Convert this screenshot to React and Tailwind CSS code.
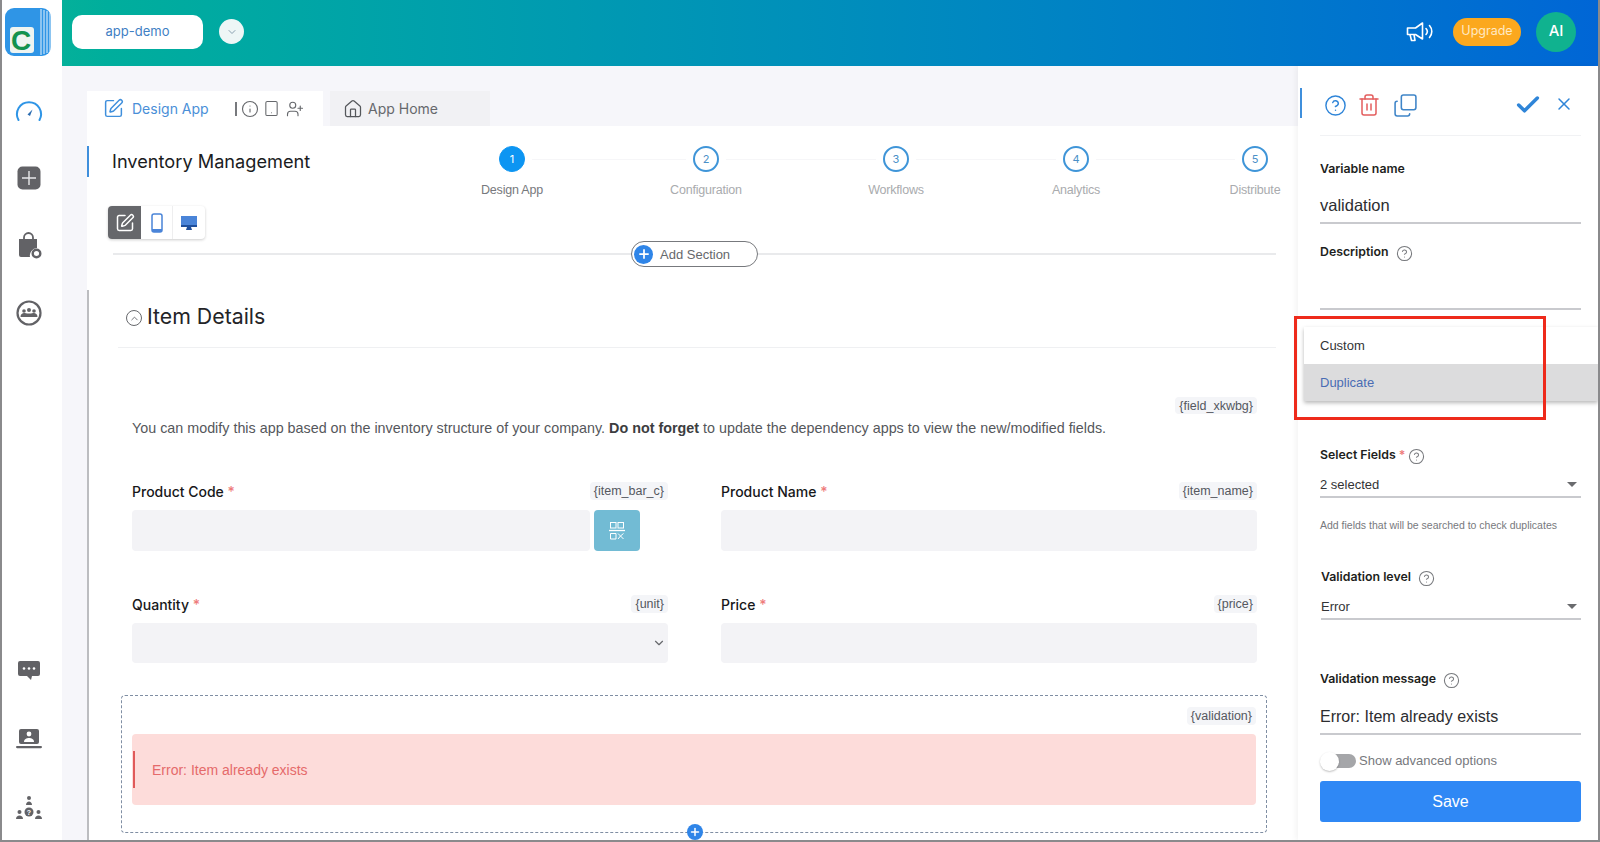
import React from 'react';
import { Check, ChevronDown, ChevronUp, CircleHelp, Copy, House, Info, Plus, SquarePen, Trash2, Tablet, UserPlus, X } from 'lucide-react';

const SANS = 'font-["Liberation_Sans",Arial,sans-serif]';

const steps = [
  { n: 1, label: 'Design App', link: 154 },
  { n: 2, label: 'Configuration', link: 150 },
  { n: 3, label: 'Workflows', link: 140 },
  { n: 4, label: 'Analytics', link: 139 },
  { n: 5, label: 'Distribute' },
];

const Logo = () => (
  <svg width="48" height="50" viewBox="0 0 48 50" className="block">
    <rect x="0" y="0" width="46" height="48" rx="9" fill="#2f95e6" />
    <path d="M36 1v46M39 2v44M42 3v42M45 5v38" stroke="#ffffff" strokeWidth="0.9" />
    <rect x="5" y="19" width="24" height="26" rx="3" fill="#eef4f1" />
    <text x="6" y="42" fontSize="28" fontWeight="700" fill="#12924f" fontFamily="Liberation Sans, sans-serif">C</text>
  </svg>
);

const GaugeIcon = () => (
  <svg width="28" height="28" viewBox="0 0 28 28" fill="none">
    <path d="M3.5 23 A12 12 0 1 1 24.5 23" stroke="#2f95e6" strokeWidth="2" strokeLinecap="round" />
    <path d="M12.5 17.5 L17.5 12.5 L15 19 Z" fill="#2b6cb0" />
  </svg>
);

const AddIcon = () => (
  <svg width="26" height="26" viewBox="0 0 26 26">
    <rect x="1.500" y="1.500" width="23" height="23" rx="5" fill="#626266" />
    <path d="M13 6v14M6 13h14" stroke="#e8e8ea" strokeWidth="1.400" />
  </svg>
);

const BagIcon = () => (
  <svg width="26" height="28" viewBox="0 0 26 28">
    <path d="M8 8V6.500a4.500 4.500 0 0 1 9 0V8" fill="none" stroke="#626266" strokeWidth="1.800" />
    <path d="M3 8h18v9a7.500 7.500 0 0 0-7 9H5a2 2 0 0 1-2-2z" fill="#626266" />
    <circle cx="20.500" cy="22.500" r="3.800" fill="none" stroke="#626266" strokeWidth="2.400" />
  </svg>
);

const GroupIcon = () => (
  <svg width="28" height="28" viewBox="0 0 28 28">
    <circle cx="14" cy="14" r="11.500" fill="none" stroke="#626266" strokeWidth="2.200" />
    <circle cx="14" cy="11" r="2" fill="#626266" />
    <circle cx="9" cy="12" r="1.800" fill="#626266" />
    <circle cx="19" cy="12" r="1.800" fill="#626266" />
    <path d="M5.500 18c0-3 2-4 3.500-4s2 .5 5 .5 3.500-.5 5-.5 3.500 1 3.500 4z" fill="#626266" />
  </svg>
);

const ChatIcon = () => (
  <svg width="28" height="28" viewBox="0 0 28 28">
    <path d="M5 5h18a2 2 0 0 1 2 2v11a2 2 0 0 1-2 2h-6l-1 4-4-4H5a2 2 0 0 1-2-2V7a2 2 0 0 1 2-2z" fill="#626266" />
    <circle cx="9" cy="12.500" r="1.300" fill="#fff" />
    <circle cx="14" cy="12.500" r="1.300" fill="#fff" />
    <circle cx="19" cy="12.500" r="1.300" fill="#fff" />
  </svg>
);

const LaptopIcon = () => (
  <svg width="28" height="28" viewBox="0 0 28 28">
    <rect x="4" y="4" width="20" height="15" rx="2" fill="#626266" />
    <circle cx="14" cy="9" r="2.400" fill="#fff" />
    <path d="M9 17c0-3 2.500-4 5-4s5 1 5 4z" fill="#fff" />
    <rect x="1" y="21" width="26" height="2.200" rx="1.100" fill="#626266" />
  </svg>
);

const NetworkIcon = () => (
  <svg width="28" height="28" viewBox="0 0 28 28">
    <circle cx="14" cy="4" r="2" fill="#626266" />
    <path d="M11 11c0-2 1.500-3.500 3-3.500s3 1.500 3 3.500z" fill="#626266" />
    <circle cx="4.500" cy="18" r="2" fill="#626266" />
    <path d="M1 25c0-2 1.500-3.500 3.500-3.500S8 23 8 25z" fill="#626266" />
    <circle cx="23.500" cy="18" r="2" fill="#626266" />
    <path d="M20 25c0-2 1.500-3.500 3.500-3.500S27 23 27 25z" fill="#626266" />
    <circle cx="14" cy="18" r="4.500" fill="#626266" />
    <text x="14" y="20.500" textAnchor="middle" fontSize="7" fontWeight="700" fill="#fff" fontFamily="Liberation Sans, sans-serif">?</text>
  </svg>
);

const SpeakerIcon = () => (
  <svg width="28" height="22" viewBox="0 0 28 22" fill="none" stroke="#ffffff" strokeWidth="1.600" className="ml-auto">
    <path d="M1.500 7h8l7-5v16l-7-4.500h-8z" strokeLinejoin="round" />
    <path d="M4 13.500l1.500 6h3.500l-1-6" strokeLinejoin="round" />
    <path d="M20 7.500a4.500 4.500 0 0 1 0 6" strokeLinecap="round" />
    <path d="M23.500 4.500a9 9 0 0 1 0 12" strokeLinecap="round" />
  </svg>
);

const ScanIcon = () => (
  <svg width="18" height="20" viewBox="0 0 18 20" fill="none" stroke="#ffffff" strokeWidth="1">
    <rect x="2.500" y="1.500" width="5.500" height="5.500" />
    <rect x="10" y="1.500" width="5.500" height="5.500" />
    <path d="M1 9.500h16" strokeWidth="1.300" />
    <path d="M2.500 18v-5.500h5.500V18zM10 12.500l2.500 2.500 3-2.500M10 18l2.500-3 3 3" />
  </svg>
);

const Tag = ({ children }) => (
  <span className={`rounded bg-[#f4f5f8] px-1 text-[12.500px] leading-[18px] text-[#55585f] ${SANS}`}>{children}</span>
);

const FieldHead = ({ label, tag }) => (
  <div className="flex h-[18px] items-center justify-between">
    <span className="text-[14px] font-medium text-[#17181a]">
      {label} <span className="text-[#ee7b7b]">*</span>
    </span>
    <Tag>{tag}</Tag>
  </div>
);

const PanelLabel = ({ children, star, help, className = '' }) => (
  <div className={`flex h-4 shrink-0 items-center text-[12.300px] font-semibold text-[#1d1e20] ${className}`}>
    {children}
    {star && <span className="ml-[3px] -mr-1 text-[#ee7b7b]">*</span>}
    {help && <CircleHelp size={17} strokeWidth={1.500} className="ml-[7px] mt-0.5 text-[#77797d]" />}
  </div>
);

const PanelSelect = ({ value, className = '' }) => (
  <div className={`flex h-[25px] items-center justify-between border-b-2 border-[#c9cace] pr-1 text-[13px] text-[#333436] ${SANS} ${className}`}>
    <span>{value}</span>
    <span className="h-0 w-0 border-x-[5px] border-t-[5px] border-x-transparent border-t-[#6a6b6e]" />
  </div>
);

const App = () => {
  return (
    <div className="flex h-[842px] w-[1600px] overflow-hidden border-x-2 border-b-2 border-[#8a8a8c] bg-white font-['Inter',sans-serif]">
      <aside className="flex w-[60px] shrink-0 flex-col items-center bg-white pr-[6px] pt-2">
        <div className="-ml-px h-[50px]"><Logo /></div>
        <div className="mt-[39px] flex flex-col items-center gap-10">
          <GaugeIcon />
          <AddIcon />
          <BagIcon />
          <GroupIcon />
        </div>
        <div className="mt-auto flex flex-col items-center gap-[41px] pb-[18px]">
          <ChatIcon />
          <LaptopIcon />
          <NetworkIcon />
        </div>
      </aside>

      <div className="flex min-w-0 flex-1 flex-col">
        <header className="flex h-[66px] shrink-0 items-center bg-gradient-to-r from-[#04b09a] to-[#0066d6] pb-[3px] pl-[10px] pr-[22px]">
          <div className="flex h-[34px] w-[131px] items-center justify-center rounded-[10px] bg-white text-[13px] text-[#3f7fc4]">app-demo</div>
          <div className="ml-4 flex h-[25px] w-[25px] items-center justify-center rounded-full bg-[#eef6f6]">
            <ChevronDown size={12} className="text-[#8aa0b0]" />
          </div>
          <SpeakerIcon />
          <div className="ml-[19px] flex h-7 w-[68px] items-center justify-center rounded-full bg-[#fba81e] text-[12.500px] text-[#ffe9c4]">Upgrade</div>
          <div className="ml-[15px] flex h-10 w-10 items-center justify-center rounded-full bg-[#10b28f] text-[15px] font-medium text-white">AI</div>
        </header>

        <div className="flex min-h-0 flex-1 bg-[#f6f6fa]">
          <main className="flex min-w-0 flex-1 flex-col pl-[25px] pt-[25px]">
            <div className="flex h-[35px] shrink-0">
              <div className="flex w-[236px] items-center bg-white pl-4">
                <SquarePen size={21} strokeWidth={1.700} className="text-[#3f8fdc]" />
                <span className="ml-2 text-[14px] text-[#4a8fd8]">Design App</span>
                <span className="ml-[26px] h-[14px] w-0.5 bg-[#77797d]" />
                <Info size={18} strokeWidth={1.500} className="ml-1 text-[#66686c]" />
                <Tablet size={17} strokeWidth={1.500} className="ml-1 text-[#66686c]" />
                <UserPlus size={18} strokeWidth={1.500} className="ml-1.5 text-[#66686c]" />
              </div>
              <div className="ml-[7px] flex w-[160px] items-center bg-[#f1f1f4] pl-[13px]">
                <House size={20} strokeWidth={1.500} className="text-[#55575b]" />
                <span className="ml-[5px] text-[14px] text-[#66686c]">App Home</span>
              </div>
            </div>

            <div className="flex min-h-0 flex-1 flex-col bg-white">
              <div className="flex h-20 shrink-0">
                <div className="mt-5 flex h-[31px] w-[385px] items-center border-l-2 border-[#3f8fdc] pl-[23px] text-[18.200px] text-[#1b1c1e]">
                  Inventory Management
                </div>
                <div className="flex pt-5">
                  {steps.map((s) => (
                    <React.Fragment key={s.n}>
                      <div className="relative z-10 flex w-20 flex-col items-center">
                        <div
                          className={
                            s.n === 1
                              ? 'flex h-[26px] w-[26px] items-center justify-center rounded-full border border-[#0d95f2] bg-[#0d95f2] text-[11px] text-white'
                              : 'flex h-[26px] w-[26px] items-center justify-center rounded-full border-2 border-[#3f95d8] bg-white text-[11px] text-[#4a90c8]'
                          }
                        >
                          {s.n}
                        </div>
                        <span className={`mt-[9px] whitespace-nowrap text-[12.500px] tracking-[-0.2px] ${SANS} ${s.n === 1 ? 'text-[#77797d]' : 'text-[#a9abae]'}`}>{s.label}</span>
                      </div>
                      {s.link && <div className="-mx-5 mt-[13px] h-px bg-[#f6f6f8]" style={{ width: s.link }} />}
                    </React.Fragment>
                  ))}
                </div>
              </div>

              <div className="ml-[21px] flex h-[33px] w-[97px] shrink-0 rounded-sm shadow-[0_1px_3px_rgba(0,0,0,0.2)]">
                <div className="flex w-[33px] items-center justify-center rounded-l-sm bg-[#66676b]">
                  <SquarePen size={20} strokeWidth={1.800} className="text-white" />
                </div>
                <div className="flex w-8 items-center justify-center border-r border-[#eeeeef]">
                  <svg width="12" height="20" viewBox="0 0 12 20"><rect x="1" y="1" width="10" height="18" rx="2" fill="none" stroke="#4a84d8" strokeWidth="1.500" /><rect x="1" y="16" width="10" height="3" fill="#4a84d8" /></svg>
                </div>
                <div className="flex w-8 items-center justify-center">
                  <svg width="18" height="18" viewBox="0 0 18 18"><rect x="1" y="2" width="16" height="10" fill="#4a84d8" /><rect x="1" y="11" width="16" height="2" fill="#1f4f9c" /><path d="M6 16h6l-1-3H7z" fill="#1f4f9c" /></svg>
                </div>
              </div>

              <div className="ml-[26px] mr-[22px] mt-0.5 flex h-[26px] shrink-0 items-center">
                <div className="h-0.5 flex-1 bg-[#e9eaec]" />
                <div className="flex h-[26px] w-[127px] items-center rounded-full border border-[#77797d] pl-[2px] text-[13px] text-[#66686c]">
                  <span className="flex h-[19px] w-[19px] items-center justify-center rounded-full bg-[#2f85e8]">
                    <Plus size={14} strokeWidth={3} className="text-white" />
                  </span>
                  <span className={`ml-[7px] mt-px ${SANS}`}>Add Section</span>
                </div>
                <div className="h-0.5 flex-1 bg-[#e9eaec]" />
              </div>

              <section className="mt-[23px] min-h-0 flex-1 border-l-2 border-[#bcbdc0] pl-[43px] pr-[41px] pt-[10px]">
                <div className="-ml-[14px] -mr-[19px] flex h-[48px] items-start border-b border-[#eff0f2]">
                  <div className="flex h-8 items-center">
                    <span className="ml-[8px] mt-1 flex h-4 w-4 items-center justify-center rounded-full border border-[#66686c]">
                      <ChevronUp size={11} className="text-[#66686c]" />
                    </span>
                    <span className="ml-[5px] mt-px text-[21.300px] text-[#232427]">Item Details</span>
                  </div>
                </div>

                <div className="mt-[49px] flex h-[17px] justify-end"><Tag>{'{field_xkwbg}'}</Tag></div>
                <p className={`mt-1 h-5 text-[14.330px] leading-5 text-[#55575b] ${SANS}`}>
                  You can modify this app based on the inventory structure of your company. <b className="text-[#3c3d40]">Do not forget</b> to update the dependency apps to view the new/modified fields.
                </p>

                <div className="mt-[44px] grid grid-cols-[536px_536px] gap-x-[53px]">
                  <div>
                    <FieldHead label="Product Code" tag="{item_bar_c}" />
                    <div className="mt-[10px] flex gap-1">
                      <div className="h-[41px] w-[458px] rounded-sm bg-[#f3f3f6]" />
                      <div className="flex h-[41px] w-[46px] items-center justify-center rounded-sm bg-[#72bbd4]">
                        <ScanIcon />
                      </div>
                    </div>
                  </div>
                  <div>
                    <FieldHead label="Product Name" tag="{item_name}" />
                    <div className="mt-[10px] h-[41px] rounded-sm bg-[#f3f3f6]" />
                  </div>
                  <div className="mt-[44px]">
                    <FieldHead label="Quantity" tag="{unit}" />
                    <div className="mt-[10px] flex h-10 items-center justify-end rounded-sm bg-[#f3f3f6] pr-0.5">
                      <ChevronDown size={14} className="text-[#66686c]" />
                    </div>
                  </div>
                  <div className="mt-[44px]">
                    <FieldHead label="Price" tag="{price}" />
                    <div className="mt-[10px] h-10 rounded-sm bg-[#f3f3f6]" />
                  </div>
                </div>

                <div className="relative -ml-[11px] -mr-[10px] mt-8 h-[138px] rounded-sm border border-dashed border-[#7f8ea3] px-[10px] pt-[11px]">
                  <div className="flex h-[18px] justify-end"><Tag>{'{validation}'}</Tag></div>
                  <div className="mt-[9px] flex h-[71px] items-center rounded-sm bg-[#fddcda] pl-px">
                    <span className="h-[37px] w-0.5 bg-[#e05a5a]" />
                    <span className={`ml-[17px] mt-px text-[14px] text-[#e56a6a] ${SANS}`}>Error: Item already exists</span>
                  </div>
                  <span className="absolute -bottom-2 left-[565px] flex h-4 w-4 items-center justify-center rounded-full bg-[#2f85e8]">
                    <Plus size={12} strokeWidth={3} className="text-white" />
                  </span>
                </div>
              </section>
            </div>
          </main>

          <aside className="relative flex w-[300px] shrink-0 flex-col bg-white pl-[22px] pr-[17px] pt-6 shadow-[-2px_0_6px_rgba(0,0,0,0.05)]">
            <span className="absolute left-0.5 top-[22px] h-[30px] w-0.5 bg-[#3f8fdc]" />
            <div className="flex h-[30px] shrink-0 items-center">
              <CircleHelp size={23} strokeWidth={1.500} className="ml-1 text-[#2f85d8]" />
              <Trash2 size={24} strokeWidth={1.500} className="ml-[10px] text-[#e35d5d]" />
              <Copy size={25} strokeWidth={1.500} className="ml-3 -scale-y-100 text-[#3f85c8]" />
              <Check size={28} strokeWidth={3} className="ml-auto text-[#2f85d8]" />
              <X size={20} strokeWidth={1.800} className="mb-0.5 ml-3 mr-[7px] text-[#2f85d8]" />
            </div>
            <div className="mt-[15px] h-px shrink-0 bg-[#f1f2f4]" />

            <PanelLabel className="mt-[25px]">Variable name</PanelLabel>
            <div className={`mt-[11px] h-9 shrink-0 border-b-2 border-[#c9cace] text-[16.500px] leading-[34px] text-[#2c2d30] ${SANS}`}>validation</div>

            <PanelLabel help className="mt-5">Description</PanelLabel>
            <div className="h-[50px] shrink-0 border-b-2 border-[#c9cace]" />

            <div className="relative h-[137px] shrink-0">
              <div className="absolute -left-4 top-[17px] z-10 w-[294px] bg-white shadow-[0_2px_4px_rgba(0,0,0,0.28)]">
                <div className={`flex h-[37px] items-center px-4 text-[13px] text-[#333436] ${SANS}`}>Custom</div>
                <div className={`flex h-[37px] items-center bg-[#dcdcdd] px-4 text-[13px] text-[#4a6cb4] ${SANS}`}>Duplicate</div>
              </div>
              <div className="absolute -left-[26px] top-1.5 z-20 h-[104px] w-[252px] border-[3px] border-[#ee2a1b]" />
            </div>

            <PanelLabel star help>Select Fields</PanelLabel>
            <PanelSelect value="2 selected" className="mt-[10px] shrink-0" />
            <div className={`mt-[19px] h-4 shrink-0 text-[10.500px] leading-4 text-[#77797d] ${SANS}`}>Add fields that will be searched to check duplicates</div>

            <PanelLabel help className="ml-px mt-[36px]">Validation level</PanelLabel>
            <PanelSelect value="Error" className="ml-px mt-[10px] shrink-0" />

            <PanelLabel help className="mt-[51px]">Validation message</PanelLabel>
            <div className={`mt-[13px] h-[35px] shrink-0 border-b-2 border-[#c9cace] text-[16.050px] leading-[32px] text-[#2c2d30] ${SANS}`}>Error: Item already exists</div>

            <div className="mt-4 flex h-5 shrink-0 items-center">
              <span className="relative h-[14px] w-9 shrink-0">
                <span className="absolute right-0 top-0 h-[14px] w-6 rounded-r-full bg-[#a5a6a9]" />
                <span className="absolute -top-[2px] left-0 h-[19px] w-[19px] rounded-full bg-white shadow-[0_1px_2px_rgba(0,0,0,0.25)]" />
              </span>
              <span className={`ml-[3px] text-[13px] text-[#77797d] ${SANS}`}>Show advanced options</span>
            </div>

            <div className={`mt-[10px] flex h-[41px] shrink-0 items-center justify-center rounded-[3px] bg-[#2f88f5] text-[16px] text-white ${SANS}`}>Save</div>
          </aside>
        </div>
      </div>
    </div>
  );
};

export default App;
